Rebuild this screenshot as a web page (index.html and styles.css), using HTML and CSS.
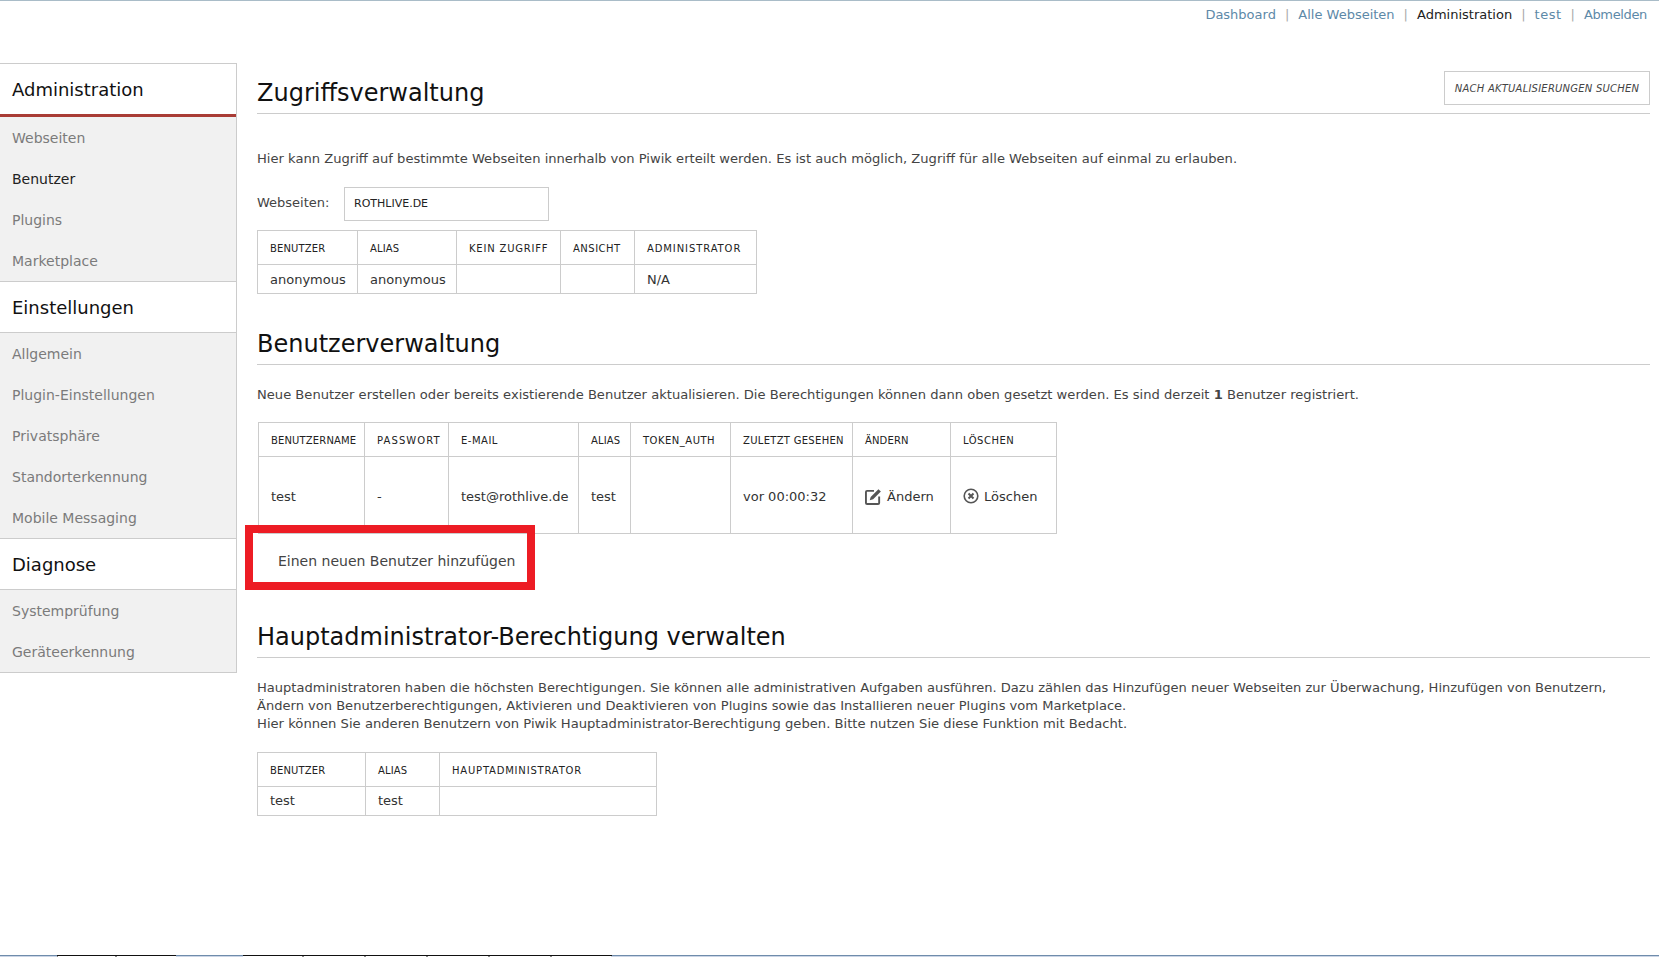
FILE: index.html
```html
<!DOCTYPE html>
<html lang="de">
<head>
<meta charset="utf-8">
<title>Piwik Administration</title>
<link rel="stylesheet" href="styles.css">
</head>
<body>
<nav class="topnav">
  <a class="toplink" href="#">Dashboard</a><span class="sep">|</span>
  <a class="toplink" href="#">Alle Webseiten</a><span class="sep">|</span>
  <span class="toplink current">Administration</span><span class="sep">|</span>
  <a class="toplink user" href="#">test</a><span class="sep">|</span>
  <a class="toplink logout" href="#">Abmelden</a>
</nav>
<div class="layout">
  <aside class="sidebar">
    <h3 class="side-head first">Administration</h3>
    <ul class="side-list">
      <li>Webseiten</li><li class="active">Benutzer</li><li>Plugins</li><li>Marketplace</li>
    </ul>
    <h3 class="side-head">Einstellungen</h3>
    <ul class="side-list">
      <li>Allgemein</li><li>Plugin-Einstellungen</li><li>Privatsphäre</li><li>Standorterkennung</li><li>Mobile Messaging</li>
    </ul>
    <h3 class="side-head">Diagnose</h3>
    <ul class="side-list">
      <li>Systemprüfung</li><li>Geräteerkennung</li>
    </ul>
  </aside>
  <main class="content">
    <section class="sec-one">
      <div class="title-row">
        <h2 class="title">Zugriffsverwaltung</h2>
        <button class="update-btn">NACH AKTUALISIERUNGEN SUCHEN</button>
      </div>
      <p class="intro">Hier kann Zugriff auf bestimmte Webseiten innerhalb von Piwik erteilt werden. Es ist auch möglich, Zugriff für alle Webseiten auf einmal zu erlauben.</p>
      <div class="site-row">
        <label class="site-label">Webseiten:</label>
        <div class="site-select">ROTHLIVE.DE</div>
      </div>
      <table class="grid t-access">
        <thead><tr><th>BENUTZER</th><th>ALIAS</th><th class="wide">KEIN ZUGRIFF</th><th class="mid">ANSICHT</th><th class="wider">ADMINISTRATOR</th></tr></thead>
        <tbody><tr><td>anonymous</td><td>anonymous</td><td></td><td></td><td>N/A</td></tr></tbody>
      </table>
    </section>
    <section class="sec-two">
      <h2 class="title plain">Benutzerverwaltung</h2>
      <p class="intro two">Neue Benutzer erstellen oder bereits existierende Benutzer aktualisieren. Die Berechtigungen können dann oben gesetzt werden. Es sind derzeit <b>1</b> Benutzer registriert.</p>
      <table class="grid t-users">
        <thead><tr><th>BENUTZERNAME</th><th class="widest">PASSWORT</th><th class="mid">E-MAIL</th><th>ALIAS</th><th class="mid">TOKEN_AUTH</th><th class="slight">ZULETZT GESEHEN</th><th>ÄNDERN</th><th class="mid">LÖSCHEN</th></tr></thead>
        <tbody><tr>
          <td>test</td><td>-</td><td>test@rothlive.de</td><td>test</td><td></td><td>vor 00:00:32</td>
          <td><span class="action"><svg class="ico" viewBox="0 0 18 18" width="17" height="17"><path d="M9.500 3H2.200C1.500 3 1 3.500 1 4.200v11.600c0 .7.5 1.200 1.200 1.200h11.600c.7 0 1.200-.5 1.200-1.200V9" fill="none" stroke="#555" stroke-width="2"/><path d="M5 13l1-3.600L14.200 1.200l2.600 2.600L8.600 12z" fill="#555"/></svg>Ändern</span></td>
          <td><span class="action"><svg class="ico" viewBox="0 0 16 16" width="16" height="16"><circle cx="8" cy="8" r="6.800" fill="none" stroke="#555" stroke-width="1.600"/><path d="M5.500 5.500l5 5M10.500 5.500l-5 5" stroke="#555" stroke-width="2"/></svg>Löschen</span></td>
        </tr></tbody>
      </table>
      <div class="add-box">Einen neuen Benutzer hinzufügen</div>
    </section>
    <section class="sec-three">
      <h2 class="title plain">Hauptadministrator-Berechtigung verwalten</h2>
      <p class="intro three">Hauptadministratoren haben die höchsten Berechtigungen. Sie können alle administrativen Aufgaben ausführen. Dazu zählen das Hinzufügen neuer Webseiten zur Überwachung, Hinzufügen von Benutzern, Ändern von Benutzerberechtigungen, Aktivieren und Deaktivieren von Plugins sowie das Installieren neuer Plugins vom Marketplace.<br><span class="third-line">Hier können Sie anderen Benutzern von Piwik Hauptadministrator-Berechtigung geben. Bitte nutzen Sie diese Funktion mit Bedacht.</span></p>
      <table class="grid t-super">
        <thead><tr><th>BENUTZER</th><th>ALIAS</th><th class="wide">HAUPTADMINISTRATOR</th></tr></thead>
        <tbody><tr><td>test</td><td>test</td><td></td></tr></tbody>
      </table>
    </section>
  </main>
</div>
<div class="bottom-strip"></div>
</body>
</html>
```
FILE: styles.css
```css
* { box-sizing: border-box; }
html, body { height: 957px; overflow: hidden; }
body {
  margin: 0;
  background: #fff;
  font-family: "DejaVu Sans", Verdana, sans-serif;
  font-size: 13px;
  color: #444;
  border-top: 1px solid #a9bcc8;
  position: relative;
}
.topnav {
  height: 62px;
  display: flex;
  justify-content: flex-end;
  align-items: flex-start;
  padding: 6px 12px 0 0;
  font-size: 13px;
  line-height: 16px;
}
.toplink { color: #5d89a8; text-decoration: none; }
.toplink.current { color: #222; }
.toplink.user { letter-spacing: .5px; }
.toplink.logout { letter-spacing: -.35px; }
.sep { color: #aaa; margin: 0 9px; }
.layout { display: flex; align-items: flex-start; }
.sidebar {
  width: 237px;
  flex: none;
  border-right: 1px solid #ccc;
  border-top: 1px solid #ccc;
}
.side-head {
  margin: 0;
  height: 51px;
  padding-left: 12px;
  font-size: 18px;
  font-weight: normal;
  line-height: 51px;
  color: #111;
  background: #fff;
  border-bottom: 1px solid #ccc;
}
.side-head.first { height: 53px; border-bottom: 3px solid #a93c36; }
.side-list {
  list-style: none;
  margin: 0;
  padding: 0;
  background: #f1f1f1;
  border-bottom: 1px solid #ccc;
}
.side-list li {
  height: 41px;
  line-height: 43px;
  padding-left: 12px;
  font-size: 14px;
  color: #7b7b7b;
}
.side-list li.active { color: #222; }
.content { flex: 1; padding: 0 9px 0 20px; min-width: 0; }
.title-row {
  position: relative;
  border-bottom: 1px solid #ccc;
  height: 51px;
}
.title {
  margin: 0;
  font-size: 24px;
  font-weight: normal;
  color: #111;
  line-height: 32px;
  padding-top: 12px;
}
.title-row .title { padding-top: 14px; }
.title.plain { border-bottom: 1px solid #ccc; padding-bottom: 4px; }
.update-btn {
  position: absolute;
  right: 0;
  top: 8px;
  width: 206px;
  height: 34px;
  padding: 0;
  background: #fff;
  border: 1px solid #ccc;
  font: italic 10px "DejaVu Sans", Verdana, sans-serif;
  letter-spacing: .22px;
  color: #444;
}
.intro { margin: 0; line-height: 18px; font-size: 13.1px; }
.sec-one .intro { padding-top: 36px; }
.site-row { display: flex; align-items: center; margin-top: 19px; }
.site-label { font-size: 13px; width: 87px; padding-bottom: 3px; }
.site-select {
  width: 205px;
  height: 34px;
  line-height: 32px;
  padding-left: 9px;
  border: 1px solid #ccc;
  font-size: 11px;
  color: #222;
}
.grid {
  border-collapse: collapse;
  border: 1px solid #ccc;
  table-layout: fixed;
  margin-top: 9px;
  color: #333;
}
.grid th {
  font-weight: normal;
  font-size: 10px;
  letter-spacing: .15px;
  text-align: left;
  height: 34px;
  padding: 2px 12px 0;
  border: 1px solid #ccc;
  color: #222;
  white-space: nowrap;
}
.grid th.slight { letter-spacing: .3px; }
.grid th.mid { letter-spacing: .5px; }
.grid th.wide { letter-spacing: .8px; }
.grid th.wider { letter-spacing: .9px; }
.grid th.widest { letter-spacing: 1.1px; }
.grid td {
  height: 29px;
  padding: 0 12px;
  border: 1px solid #ccc;
  font-size: 13px;
  white-space: nowrap;
}
.sec-two { margin-top: 22px; }
.intro.two { padding-top: 21px; }
.t-access { width: 500px; }
.t-users { width: 798px; margin-top: 18px; margin-left: 1px; }
.t-users td { height: 77px; padding-top: 2px; }
.t-access th:nth-child(1) { width: 100px; }
.t-access th:nth-child(2) { width: 99px; }
.t-access th:nth-child(3) { width: 104px; }
.t-access th:nth-child(4) { width: 74px; }
.t-users th:nth-child(1) { width: 106px; }
.t-users th:nth-child(2) { width: 84px; }
.t-users th:nth-child(3) { width: 130px; }
.t-users th:nth-child(4) { width: 52px; }
.t-users th:nth-child(5) { width: 100px; }
.t-users th:nth-child(6) { width: 122px; }
.t-users th:nth-child(7) { width: 98px; }
.t-users th:nth-child(8) { width: 106px; }
.action { display: flex; align-items: center; gap: 5px; }
.ico { flex: none; }
.add-box {
  position: relative;
  z-index: 1;
  width: 290px;
  height: 65px;
  margin: -9px 0 0 -12px;
  border: 8px solid #ed1c24;
  padding: 4px 0 0 25px;
  line-height: 49px;
  font-size: 14px;
  color: #444;
}
.sec-three { margin-top: 19px; }
.intro.three { padding-top: 21px; font-size: 13.05px; }
.third-line { font-size: 13.15px; }
.t-super { width: 400px; margin-top: 19px; }
.t-super td { padding-bottom: 2px; }
.t-super th:nth-child(1) { width: 108px; }
.t-super th:nth-child(2) { width: 74px; }
.bottom-strip {
  position: absolute;
  left: 0;
  right: 0;
  bottom: 0;
  height: 2px;
  background-repeat: no-repeat;
  background-size: 100% 1px;
  background-position: 0 0, 0 1px;
  background-image:
    linear-gradient(90deg, #6f8cab 0 57px, #111 57px 176px, #6f8cab 176px 243px, #111 243px 612px, #6f8cab 612px),
    linear-gradient(90deg, #cbd5e6 0 57px, #888 57px 58px, #fff 58px 115px, #888 115px 117px, #fff 117px 176px, #cbd5e6 176px 243px, #fff 243px 302px, #888 302px 304px, #fff 304px 364px, #888 364px 366px, #fff 366px 426px, #888 426px 428px, #fff 428px 488px, #888 488px 490px, #fff 490px 550px, #888 550px 552px, #fff 552px 611px, #cbd5e6 611px);
}
```
